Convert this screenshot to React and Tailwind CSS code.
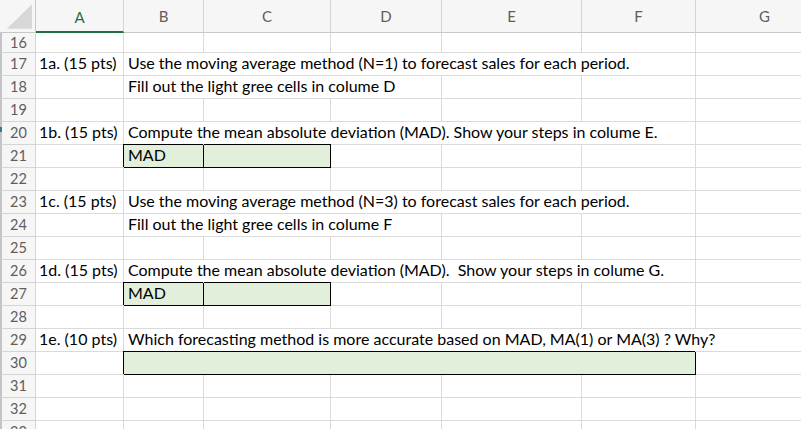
import React from "react";

// column widths: row header, A..G
const grid = "grid grid-cols-[36px_88px_80px_127px_111px_140px_114px_138px]";
const line = "border-r border-b border-[#dadada]";
const font = { fontFamily: "Lato, 'Open Sans', sans-serif" };

const rows = [
  { n: 16, h: "h-[20px]" },
  { n: 17, a: "1a. (15 pts)", b: "Use the moving average method (N=1) to forecast sales for each period.", span: 5 },
  { n: 18, b: "Fill out the light gree cells in colume D", span: 3 },
  { n: 19 },
  { n: 20, a: "1b. (15 pts)", b: "Compute the mean absolute deviation (MAD). Show your steps in colume E.", span: 5 },
  { n: 21, mad: true },
  { n: 22 },
  { n: 23, a: "1c. (15 pts)", b: "Use the moving average method (N=3) to forecast sales for each period.", span: 5 },
  { n: 24, b: "Fill out the light gree cells in colume F", span: 3 },
  { n: 25 },
  { n: 26, a: "1d. (15 pts)", b: "Compute the mean absolute deviation (MAD).  Show your steps in colume G.", span: 5 },
  { n: 27, mad: true },
  { n: 28 },
  { n: 29, a: "1e. (10 pts)", b: "Which forecasting method is more accurate based on MAD, MA(1) or MA(3) ? Why?", span: 6 },
  { n: 30, answer: true },
  { n: 31 },
  { n: 32 },
  { n: 33 },
];

const spanClass = { 3: "col-span-3", 5: "col-span-5", 6: "col-span-6" };

const Cell = ({ className = "", children }) => (
  <div className={`${line} flex items-end pb-[2px] overflow-visible whitespace-pre ${className}`}>
    {children}
  </div>
);

const Row = ({ r }) => {
  const h = r.h || "h-[23px]";
  const cells = [];
  cells.push(
    <div
      key="n"
      className={`${h} bg-[#f6f6f6] border-r border-b border-[#d4d4d4] border-l-2 border-l-[#c4c4c4] flex items-center justify-center text-[14.5px] text-[#5e5e5e]`}
    >
      {r.n}
    </div>
  );
  cells.push(
    <Cell key="a" className={`${h} pl-[3px]`}>
      {r.a}
    </Cell>
  );
  let used = 1;
  if (r.b) {
    cells.push(
      <Cell key="b" className={`${h} pl-[4px] ${spanClass[r.span]}`}>
        {r.b}
      </Cell>
    );
    used += r.span;
  } else if (r.mad) {
    cells.push(
      <div
        key="b"
        className={`${h} relative bg-[#e2efda] border-r border-b border-black shadow-[-1px_-1px_0_0_#000] flex items-end pb-[2px] pl-[4px]`}
      >
        MAD
      </div>
    );
    cells.push(
      <div
        key="c"
        className={`${h} relative bg-[#e2efda] border-r border-b border-black shadow-[0_-1px_0_0_#000]`}
      />
    );
    used += 2;
  } else if (r.answer) {
    cells.push(
      <div
        key="b"
        className={`${h} col-span-5 relative bg-[#e2efda] border-r border-b border-black shadow-[-1px_-1px_0_0_#000]`}
      />
    );
    used += 5;
  }
  for (let i = used; i < 7; i++) {
    cells.push(<Cell key={"e" + i} className={h} />);
  }
  return cells;
};

export default function App() {
  const letters = ["A", "B", "C", "D", "E", "F", "G"];
  return (
    <div className="w-[801px] h-[429px] overflow-hidden bg-white relative text-[16px] leading-[20px] text-black" style={font}>
      <div className={`${grid} w-[834px]`}>
        <div className="h-[33px] bg-[#f6f6f6] border-r border-b border-[#c8c8c8] flex items-center justify-center">
          <svg width="36" height="32" viewBox="0 0 36 32">
            <polygon points="7,29 33,4 33,29" fill="#d7d7d7" />
          </svg>
        </div>
        {letters.map((l) =>
          l === "A" ? (
            <div
              key={l}
              className="h-[33px] bg-[#f6f6f6] border-r border-[#d4d4d4] border-b-2 border-b-[#1d7044] flex items-center justify-center text-[15px] text-[#1d7044] pt-[2px]"
            >
              {l}
            </div>
          ) : (
            <div
              key={l}
              className="h-[33px] bg-[#f6f6f6] border-r border-b border-[#d4d4d4] border-b-[#c8c8c8] flex items-center justify-center text-[15px] text-[#5e5e5e]"
            >
              {l}
            </div>
          )
        )}
        {rows.map((r) => (
          <Row key={r.n} r={r} />
        ))}
      </div>
      <div className="absolute left-0 top-[127px] w-[2px] h-[5px] bg-[#2a7f8a]" />
    </div>
  );
}
